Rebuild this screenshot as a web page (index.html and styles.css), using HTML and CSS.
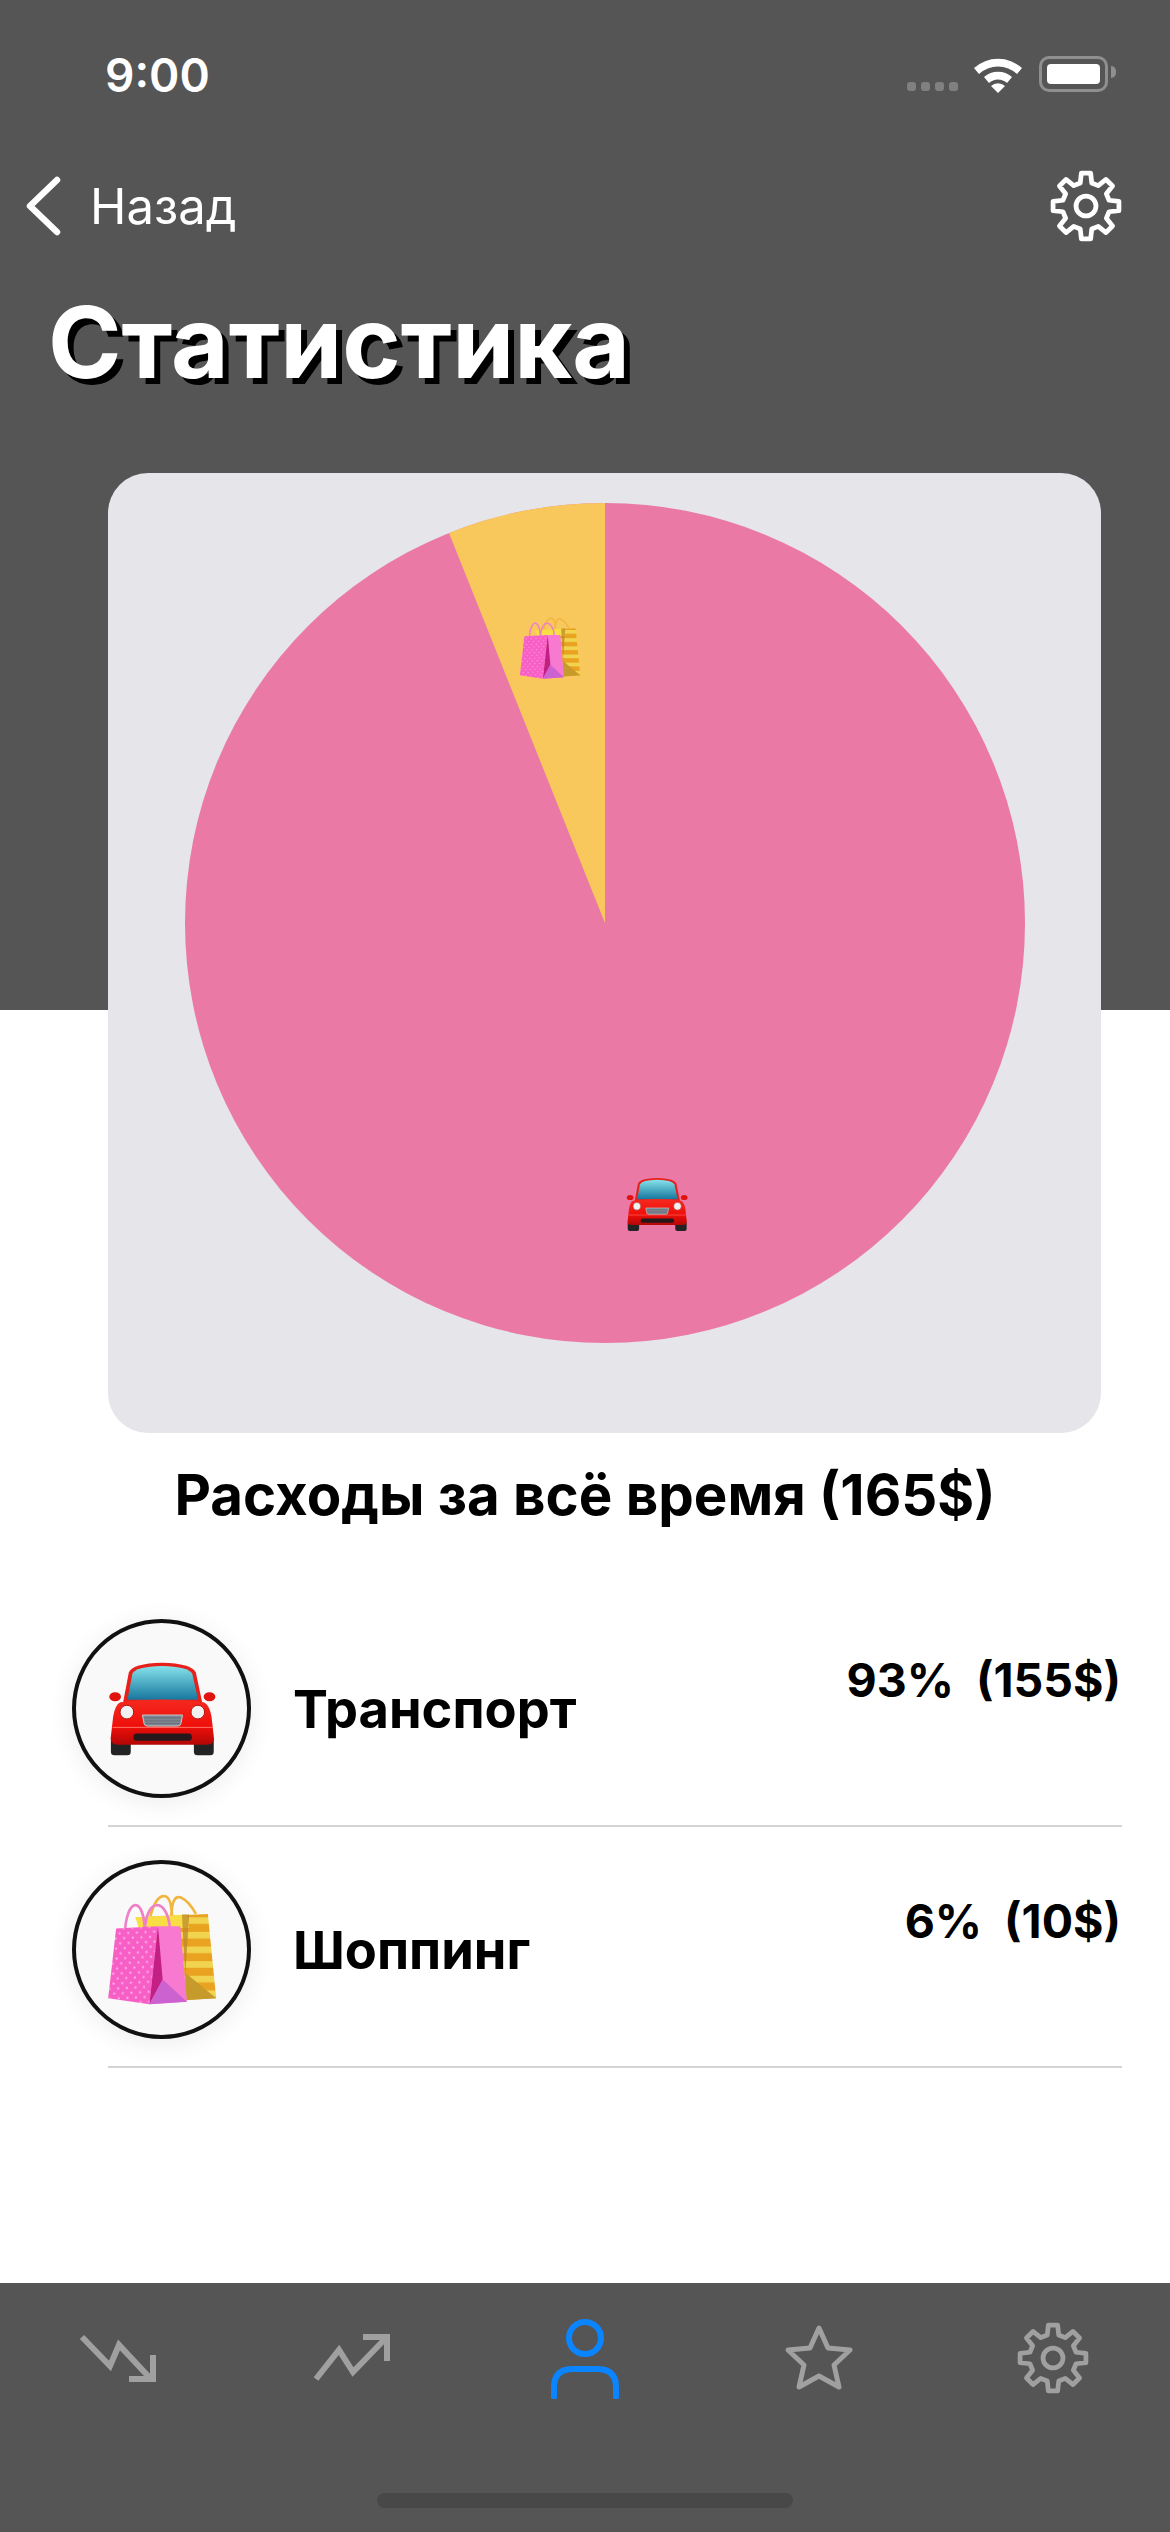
FILE: index.html
```html
<!DOCTYPE html>
<html lang="ru">
<head>
  <meta charset="UTF-8">
  <title>Статистика</title>
  <link rel="stylesheet" href="styles.css">
</head>
<body>

<!-- общие иконки -->
<svg class="defs" width="0" height="0">
  <defs>
    <linearGradient id="carGlass" x1="0" y1="0" x2="0" y2="1">
      <stop offset="0" stop-color="#86e2ea"/>
      <stop offset="1" stop-color="#17779f"/>
    </linearGradient>
    <linearGradient id="carBody" x1="0" y1="0" x2="0" y2="1">
      <stop offset="0" stop-color="#f5291f"/>
      <stop offset="0.6" stop-color="#ef0f0a"/>
      <stop offset="1" stop-color="#b30606"/>
    </linearGradient>
    <pattern id="bagDots" width="26" height="30" patternUnits="userSpaceOnUse" patternTransform="rotate(-3)">
      <circle cx="7" cy="8" r="3.4" fill="#ffb3e6"/>
      <circle cx="20" cy="23" r="3.4" fill="#ffb3e6"/>
    </pattern>
    <pattern id="bagStripes" width="40" height="44" patternUnits="userSpaceOnUse">
      <rect width="40" height="44" fill="#eaa320"/>
      <rect y="0" width="40" height="20" fill="#f0d34e"/>
    </pattern>
    <symbol id="car" viewBox="205 215 330 295">
      <ellipse cx="226" cy="325" rx="18" ry="14" fill="#e0130e"/>
      <ellipse cx="516" cy="325" rx="18" ry="14" fill="#e0130e"/>
      <path d="M250 345 L268 250 Q280 222 370 220 Q460 222 474 250 L494 345 Z" fill="#e8201a"/>
      <path d="M264 334 L279 254 Q288 232 370 230 Q452 232 463 254 L481 334 Z" fill="url(#carGlass)"/>
      <rect x="213" y="450" width="61" height="55" rx="11" fill="#232323"/>
      <rect x="468" y="450" width="61" height="55" rx="11" fill="#232323"/>
      <path d="M242 342 Q370 324 498 342 Q516 350 522 385 L530 455 Q528 472 510 472 L232 472 Q214 472 212 455 L220 385 Q226 350 242 342 Z" fill="url(#carBody)"/>
      <path d="M218 419 H526" stroke="#ff7468" stroke-width="3"/>
      <circle cx="262" cy="372" r="21" fill="#f1f1f1" stroke="#b3100c" stroke-width="3"/>
      <circle cx="480" cy="372" r="21" fill="#f1f1f1" stroke="#b3100c" stroke-width="3"/>
      <path d="M310 381 H433 L428 408 Q426 415 418 415 H325 Q317 415 315 408 Z" fill="#7e8792" stroke="#c9ced4" stroke-width="3"/>
      <path d="M316 390 H428 M318 399 H426 M320 407 H424" stroke="#5c636c" stroke-width="2"/>
      <rect x="282" y="438" width="180" height="22" rx="11" fill="#26181a"/>
    </symbol>
    <symbol id="bags" viewBox="205 898 330 334">
      <path d="M335 965 Q352 900 380 905 Q398 910 400 965 M398 965 Q400 900 425 908 Q450 918 472 958" fill="none" stroke="#f2b540" stroke-width="8"/>
      <path d="M290 968 L508 958 L533 1212 L420 1218 Z" fill="url(#bagStripes)"/>
      <path d="M290 968 L445 960 L452 1000 L300 1000 Z" fill="#f8dd45"/>
      <path d="M440 1135 L533 1212 L440 1218 Z" fill="#c79a2c"/>
      <path d="M430 960 H452 L440 1140 Z" fill="#b9832a" opacity="0.7"/>
      <path d="M258 1026 C260 900 322 900 318 1026 M318 1026 C316 905 385 905 394 1000" fill="none" stroke="#ee82c8" stroke-width="8"/>
      <path d="M232 1002 L358 995 L332 1230 L208 1212 Z" fill="#f75fc6"/>
      <path d="M232 1002 L358 995 L332 1230 L208 1212 Z" fill="url(#bagDots)"/>
      <path d="M358 995 L425 995 L445 1222 L332 1230 Z" fill="#f87ad0"/>
      <path d="M358 995 L372 1155 L332 1230 Z" fill="#c41f84"/>
      <path d="M372 1155 L445 1222 L332 1230 Z" fill="#cc62d0"/>
    </symbol>
    <symbol id="gear" viewBox="0 0 80 80">
      <g transform="translate(40 40)" fill="none" stroke="currentColor" stroke-width="5" stroke-linejoin="round">
        <polygon points="-6.05,-24.26 -4.87,-34.66 4.87,-34.66 6.05,-24.26 12.88,-21.43 21.06,-27.95 27.95,-21.06 21.43,-12.88 24.26,-6.05 34.66,-4.87 34.66,4.87 24.26,6.05 21.43,12.88 27.95,21.06 21.06,27.95 12.88,21.43 6.05,24.26 4.87,34.66 -4.87,34.66 -6.05,24.26 -12.88,21.43 -21.06,27.95 -27.95,21.06 -21.43,12.88 -24.26,6.05 -34.66,4.87 -34.66,-4.87 -24.26,-6.05 -21.43,-12.88 -27.95,-21.06 -21.06,-27.95 -12.88,-21.43"/>
        <circle r="10.5"/>
      </g>
    </symbol>
  </defs>
</svg>

<div class="page">
  <header class="hero">
    <div class="status">
      <span class="time">9:00</span>
      <div class="status-icons">
        <div class="signal"><i></i><i></i><i></i><i></i></div>
        <svg class="wifi" width="50" height="38" viewBox="0 0 50 38">
          <path d="M1 13 A36 36 0 0 1 49 13 L44 19 A28 28 0 0 0 6 19 Z" fill="#fff"/>
          <path d="M11 24 A21 21 0 0 1 39 24 L34 30 A13 13 0 0 0 16 30 Z" fill="#fff" transform="translate(0 -2)"/>
          <path d="M18 31 A10 10 0 0 1 32 31 L25 38 Z" fill="#fff"/>
        </svg>
        <div class="battery"><div class="battery-fill"></div></div>
      </div>
    </div>
    <nav class="navbar">
      <div class="back">
        <svg width="40" height="60" viewBox="0 0 40 60">
          <path d="M33 4 L6 30 L33 56" fill="none" stroke="#fff" stroke-width="6.5" stroke-linecap="round" stroke-linejoin="round"/>
        </svg>
        <span>Назад</span>
      </div>
      <svg class="nav-gear" width="76" height="76"><use href="#gear"/></svg>
    </nav>
    <h1>Статистика</h1>
  </header>

  <section class="chart-card">
    <svg class="pie" width="993" height="960" viewBox="0 0 993 960">
      <circle cx="497" cy="450" r="420" fill="#ea7aa5"/>
      <path d="M497 450 L341 60 A420 420 0 0 1 497 30 Z" fill="#f8c85c"/>
      <use href="#bags" x="411" y="144" width="62" height="62"/>
      <use href="#car" x="518" y="704" width="62" height="55"/>
    </svg>
  </section>

  <h2 class="caption">Расходы за всё время (165$)</h2>

  <ul class="expenses">
    <li class="expense">
      <div class="expense-main">
        <div class="expense-icon"><svg width="108" height="96"><use href="#car"/></svg></div>
        <span class="expense-name">Транспорт</span>
        <span class="expense-sum">93%&nbsp;&nbsp;(155$)</span>
      </div>
      <div class="expense-line"></div>
    </li>
    <li class="expense">
      <div class="expense-main">
        <div class="expense-icon"><svg width="110" height="111"><use href="#bags"/></svg></div>
        <span class="expense-name">Шоппинг</span>
        <span class="expense-sum">6%&nbsp;&nbsp;(10$)</span>
      </div>
      <div class="expense-line"></div>
    </li>
  </ul>

  <footer class="tabbar">
    <div class="tabs">
      <div class="tab">
        <svg width="80" height="60" viewBox="0 0 80 60">
          <path d="M5 9 L33 38 L42 17 L72 49 M52 51 H76 V27" fill="none" stroke="#a0a0a0" stroke-width="6"/>
        </svg>
      </div>
      <div class="tab">
        <svg width="80" height="60" viewBox="0 0 80 60">
          <path d="M5 51 L28 22 L42 44 L73 12 M52 9 H76 V33" fill="none" stroke="#a0a0a0" stroke-width="6"/>
        </svg>
      </div>
      <div class="tab">
        <svg width="80" height="82" viewBox="0 0 80 82">
          <circle cx="40" cy="21" r="16" fill="none" stroke="#0a84ff" stroke-width="6"/>
          <path d="M9 80 V70 Q9 52 28 52 H52 Q71 52 71 70 V80" fill="none" stroke="#0a84ff" stroke-width="6" stroke-linecap="round"/>
        </svg>
      </div>
      <div class="tab">
        <svg width="72" height="72" viewBox="0 0 72 72">
          <path d="M36 6 L45 26 L67 28 L51 43 L56 65 L36 54 L16 65 L21 43 L5 28 L27 26 Z" fill="none" stroke="#a0a0a0" stroke-width="5" stroke-linejoin="round"/>
        </svg>
      </div>
      <div class="tab tab-gear"><svg width="76" height="76"><use href="#gear"/></svg></div>
    </div>
    <div class="home-bar"></div>
  </footer>
</div>

</body>
</html>
```

FILE: styles.css
```css
* {
  box-sizing: border-box;
}
body {
  margin: 0;
  background: #fff;
  font-family: 'Inter', 'Liberation Sans', sans-serif;
  color: #000;
}
.defs {
  position: absolute;
}
.page {
  width: 1170px;
  height: 2532px;
  display: flex;
  flex-direction: column;
  overflow: hidden;
}

/* верхний блок */
.hero {
  height: 1010px;
  flex: none;
  background: #555;
  color: #fff;
}
.status {
  height: 148px;
  padding: 48px 62px 0 105px;
  display: flex;
  justify-content: space-between;
}
.time {
  font-size: 46px;
  font-weight: 600;
  line-height: 54px;
}
.status-icons {
  display: flex;
  align-items: flex-start;
}
.signal {
  display: flex;
  gap: 5px;
  margin-top: 34px;
  margin-right: 15px;
}
.signal i {
  width: 9px;
  height: 9px;
  border-radius: 3px;
  background: #808080;
}
.wifi {
  margin-top: 7px;
  margin-right: 16px;
}
.battery {
  position: relative;
  width: 69px;
  height: 36px;
  margin-top: 8px;
  padding: 5px;
  border: 3px solid #8f8f8f;
  border-radius: 10px;
}
.battery::after {
  content: '';
  position: absolute;
  right: -11px;
  top: 7px;
  width: 5px;
  height: 12px;
  border-radius: 0 6px 6px 0;
  background: #8f8f8f;
}
.battery-fill {
  height: 100%;
  border-radius: 4px;
  background: #fff;
}
.navbar {
  height: 80px;
  padding: 0 46px 0 24px;
  display: flex;
  justify-content: space-between;
  align-items: center;
  margin-top: 18px;
}
.back {
  display: flex;
  align-items: center;
  gap: 26px;
  font-size: 49px;
}
.nav-gear {
  color: #fff;
}
h1 {
  margin: 38px 0 0 48px;
  font-size: 99.5px;
  font-weight: 700;
  line-height: 116px;
  text-shadow: 6px 6px 0 #000;
}

/* диаграмма */
.chart-card {
  flex: none;
  margin: -537px 0 0 108px;
  width: 993px;
  height: 960px;
  background: #e5e5ea;
  border-radius: 40px;
}
.pie {
  display: block;
}
.caption {
  margin: 30px 0 0;
  font-size: 56.4px;
  font-weight: 700;
  line-height: 64px;
  text-align: center;
}

/* список */
.expenses {
  list-style: none;
  margin: 59px 48px 0 72px;
  padding: 0;
}
.expense-main {
  display: flex;
  align-items: center;
  padding: 33px 1px 27px 0;
  position: relative;
}
.expense-icon {
  width: 179px;
  height: 179px;
  flex: none;
  display: flex;
  align-items: center;
  justify-content: center;
  background: #f9f9f9;
  border: 4px solid #111;
  border-radius: 50%;
  box-shadow: 0 4px 26px rgba(0,0,0,0.08);
}
.expense-name {
  margin-left: 42px;
  font-size: 52.4px;
  font-weight: 700;
}
.expense-sum {
  margin-left: auto;
  align-self: flex-start;
  margin-top: 34px;
  font-size: 46.5px;
  font-weight: 700;
  line-height: 54px;
}
.expense-line {
  height: 2px;
  margin-left: 36px;
  background: #d4d4d4;
}

/* нижняя панель */
.tabbar {
  margin-top: auto;
  height: 249px;
  flex: none;
  padding-top: 34px;
  background: #555;
}
.tabs {
  display: flex;
  height: 82px;
}
.tab {
  flex: 1;
  display: flex;
  align-items: center;
  justify-content: center;
}
.tab-gear {
  color: #a0a0a0;
}
.home-bar {
  width: 416px;
  height: 15px;
  margin: 94px auto 0;
  border-radius: 8px;
  background: #484848;
}
```
